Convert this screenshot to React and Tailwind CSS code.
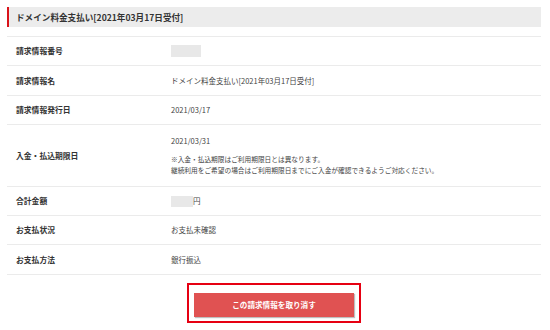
const rows = [
  { label: "請求情報番号", h: "h-[29px]", value: <span className="block w-[30px] h-[12px] bg-[#e8e8e8]" /> },
  { label: "請求情報名", h: "h-[30px]", value: "ドメイン料金支払い[2021年03月17日受付]" },
  { label: "請求情報発行日", h: "h-[29px]", value: "2021/03/17" },
  { label: "入金・払込期限日", h: "h-[62px]", deadline: true },
  {
    label: "合計金額",
    h: "h-[29px]",
    value: (
      <span className="flex items-center">
        <span className="block w-[22px] h-[11px] bg-[#e8e8e8]" />
        円
      </span>
    ),
  },
  { label: "お支払状況", h: "h-[29px]", value: "お支払未確認" },
  { label: "お支払方法", h: "h-[30px]", value: "銀行振込" },
];

function Row({ row }) {
  return (
    <div className={`flex items-center border-b border-[#ebebeb] ${row.h}`}>
      <div className="w-[164px] pl-[9px] text-[7.8px] font-bold text-[#333]">{row.label}</div>
      <div className="flex-1 text-[7.5px] text-[#444]">
        {row.deadline ? (
          <div className="flex flex-col">
            <div className="leading-[10px]">2021/03/31</div>
            <div className="mt-[8px] text-[6.7px] leading-[11px]">
              <div>※入金・払込期限はご利用期限日とは異なります。</div>
              <div>継続利用をご希望の場合はご利用期限日までにご入金が確認できるようご対応ください。</div>
            </div>
          </div>
        ) : (
          row.value
        )}
      </div>
    </div>
  );
}

export default function App() {
  return (
    <div
      className="w-[550px] h-[330px] bg-white pl-[7px] pr-[9px] pt-[7px]"
      style={{ fontFamily: '"Noto Sans CJK JP", "Noto Sans", sans-serif' }}
    >
      <div className="h-[20px] flex items-center bg-[#ececec] border-l-2 border-[#d9131a] pl-[7px] text-[8.6px] font-bold text-[#333]">
        ドメイン料金支払い[2021年03月17日受付]
      </div>

      <div className="mt-[9px] border-t border-[#ebebeb]">
        {rows.map((row) => (
          <Row key={row.label} row={row} />
        ))}
      </div>

      <div className="flex justify-center mt-[8px]">
        <div className="border-2 border-[#e60012] px-[5px] py-[4px]">
          <button className="w-[160px] h-[24px] bg-[#e05252] text-white text-[7.6px] font-bold shadow-[1px_1px_1px_rgba(0,0,0,0.25)]">
            この請求情報を取り消す
          </button>
        </div>
      </div>
    </div>
  );
}
